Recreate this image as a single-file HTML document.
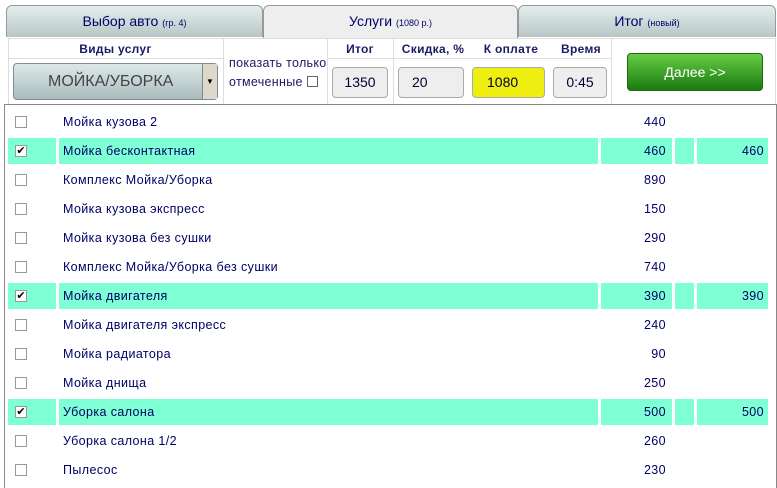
<!DOCTYPE html>
<html><head><meta charset="utf-8"><style>
*{margin:0;padding:0;box-sizing:border-box}
html,body{width:777px;height:488px;overflow:hidden}
body{background:#fff;font-family:"Liberation Sans",Arial,sans-serif;position:relative;color:#000066}
.a{position:absolute}
.tab{position:absolute;top:5px;height:32px;border:1px solid #999;border-bottom:none;border-radius:6px 6px 0 0;background:linear-gradient(#e4eeee,#b9c6c6);text-align:center;line-height:30px;font-size:14px;color:#000066}
.tab small{font-size:9px}
.tab.on{background:#eee;color:#000066;height:33px}
.hd{position:absolute;font-weight:bold;font-size:12px;text-align:center;color:#1a1a66;letter-spacing:0.3px}
.box{position:absolute;top:67px;height:31px;border:1px solid #aaa;border-radius:4px;background:#eee;font-size:14px;line-height:29px;text-align:center;color:#000033}
.vl{position:absolute;width:1px;background:#ddd}
.cb{position:absolute;left:15px;width:12px;height:12px;border:1px solid #999;background:#fff;font-size:11px;line-height:10px;text-align:center;color:#000}
.row{position:absolute;left:8px;width:760px;height:26px;font-size:12.5px;line-height:26px;letter-spacing:0.4px}
.row div{position:absolute;top:0;height:26px}
.row.h div{background:#7fffd4}
.n{left:51px;width:539px;padding-left:4px}
.p{left:593px;width:71px;text-align:right;padding-right:6px}
.g{left:667px;width:19px}
.q{left:689px;width:71px;text-align:right;padding-right:4px}
.c{left:0;width:48px}
</style></head><body>
<div class="tab" style="left:6px;width:257px">Выбор авто <small>(гр. 4)</small></div>
<div class="tab on" style="left:263px;width:255px">Услуги <small>(1080 р.)</small></div>
<div class="tab" style="left:518px;width:258px">Итог <small>(новый)</small></div>
<div class="a" style="left:8px;top:38px;width:768px;height:67px;border:1px solid #ddd"></div>
<div class="a" style="left:8px;top:58px;width:215px;height:1px;background:#ddd"></div>
<div class="a" style="left:327px;top:58px;width:284px;height:1px;background:#ddd"></div>
<div class="vl" style="left:223px;top:38px;height:66px"></div>
<div class="vl" style="left:327px;top:38px;height:66px"></div>
<div class="vl" style="left:393px;top:38px;height:66px"></div>
<div class="vl" style="left:611px;top:38px;height:66px"></div>
<div class="hd" style="left:8px;top:42px;width:215px">Виды услуг</div>
<div class="hd" style="left:327px;top:42px;width:66px">Итог</div>
<div class="hd" style="left:393px;top:42px;width:80px">Скидка, %</div>
<div class="hd" style="left:471px;top:42px;width:80px">К оплате</div>
<div class="hd" style="left:551px;top:42px;width:60px">Время</div>
<div class="a" style="left:13px;top:63px;width:205px;height:37px;border:1px solid #889;border-radius:4px;background:linear-gradient(#dde9e9,#a9bbbb);font-size:16px;line-height:35px;color:#444;padding-left:34px">МОЙКА/УБОРКА</div>
<div class="a" style="left:202px;top:64px;width:15px;height:35px;background:#ddd8cc;border-left:1px solid #888;font-size:8px;line-height:35px;text-align:center;color:#000">▼</div>
<div class="a" style="left:229px;top:54px;font-size:12.5px;line-height:19px;color:#1a1a66;letter-spacing:0.3px">показать только<br>отмеченные <span style="display:inline-block;width:11px;height:11px;border:1px solid #666;vertical-align:-1px"></span></div>
<div class="box" style="left:332px;width:56px">1350</div>
<div class="box" style="left:398px;width:66px;text-align:left;padding-left:13px">20</div>
<div class="box" style="left:472px;width:73px;background:#eeee11;text-align:left;padding-left:14px">1080</div>
<div class="box" style="left:553px;width:54px">0:45</div>
<div class="a" style="left:627px;top:53px;width:136px;height:38px;border-radius:4px;background:linear-gradient(#66cc44,#1a7a10);border:1px solid #1a6a10;color:#fff;font-size:14px;text-align:center;line-height:36px">Далее &gt;&gt;</div>
<div class="a" style="left:4px;top:104px;width:773px;height:390px;border:1px solid #888"></div>
<div id="rows"></div>
<script>
var d=[["Мойка кузова 2",440],["Мойка бесконтактная",460,1],["Комплекс Мойка/Уборка",890],["Мойка кузова экспресс",150],["Мойка кузова без сушки",290],["Комплекс Мойка/Уборка без сушки",740],["Мойка двигателя",390,1],["Мойка двигателя экспресс",240],["Мойка радиатора",90],["Мойка днища",250],["Уборка салона",500,1],["Уборка салона 1/2",260],["Пылесос",230]];
var h="";d.forEach(function(r,i){var t=109+29*i;h+='<div class="row'+(r[2]?' h':'')+'" style="top:'+t+'px"><div class="c"></div><div class="n">'+r[0]+'</div><div class="p">'+r[1]+'</div>'+(r[2]?'<div class="g"></div><div class="q">'+r[1]+'</div>':'')+'</div><div class="cb" style="top:'+(t+7)+'px">'+(r[2]?'✔':'')+'</div>';});
document.getElementById("rows").innerHTML=h;
</script>
</body></html>
